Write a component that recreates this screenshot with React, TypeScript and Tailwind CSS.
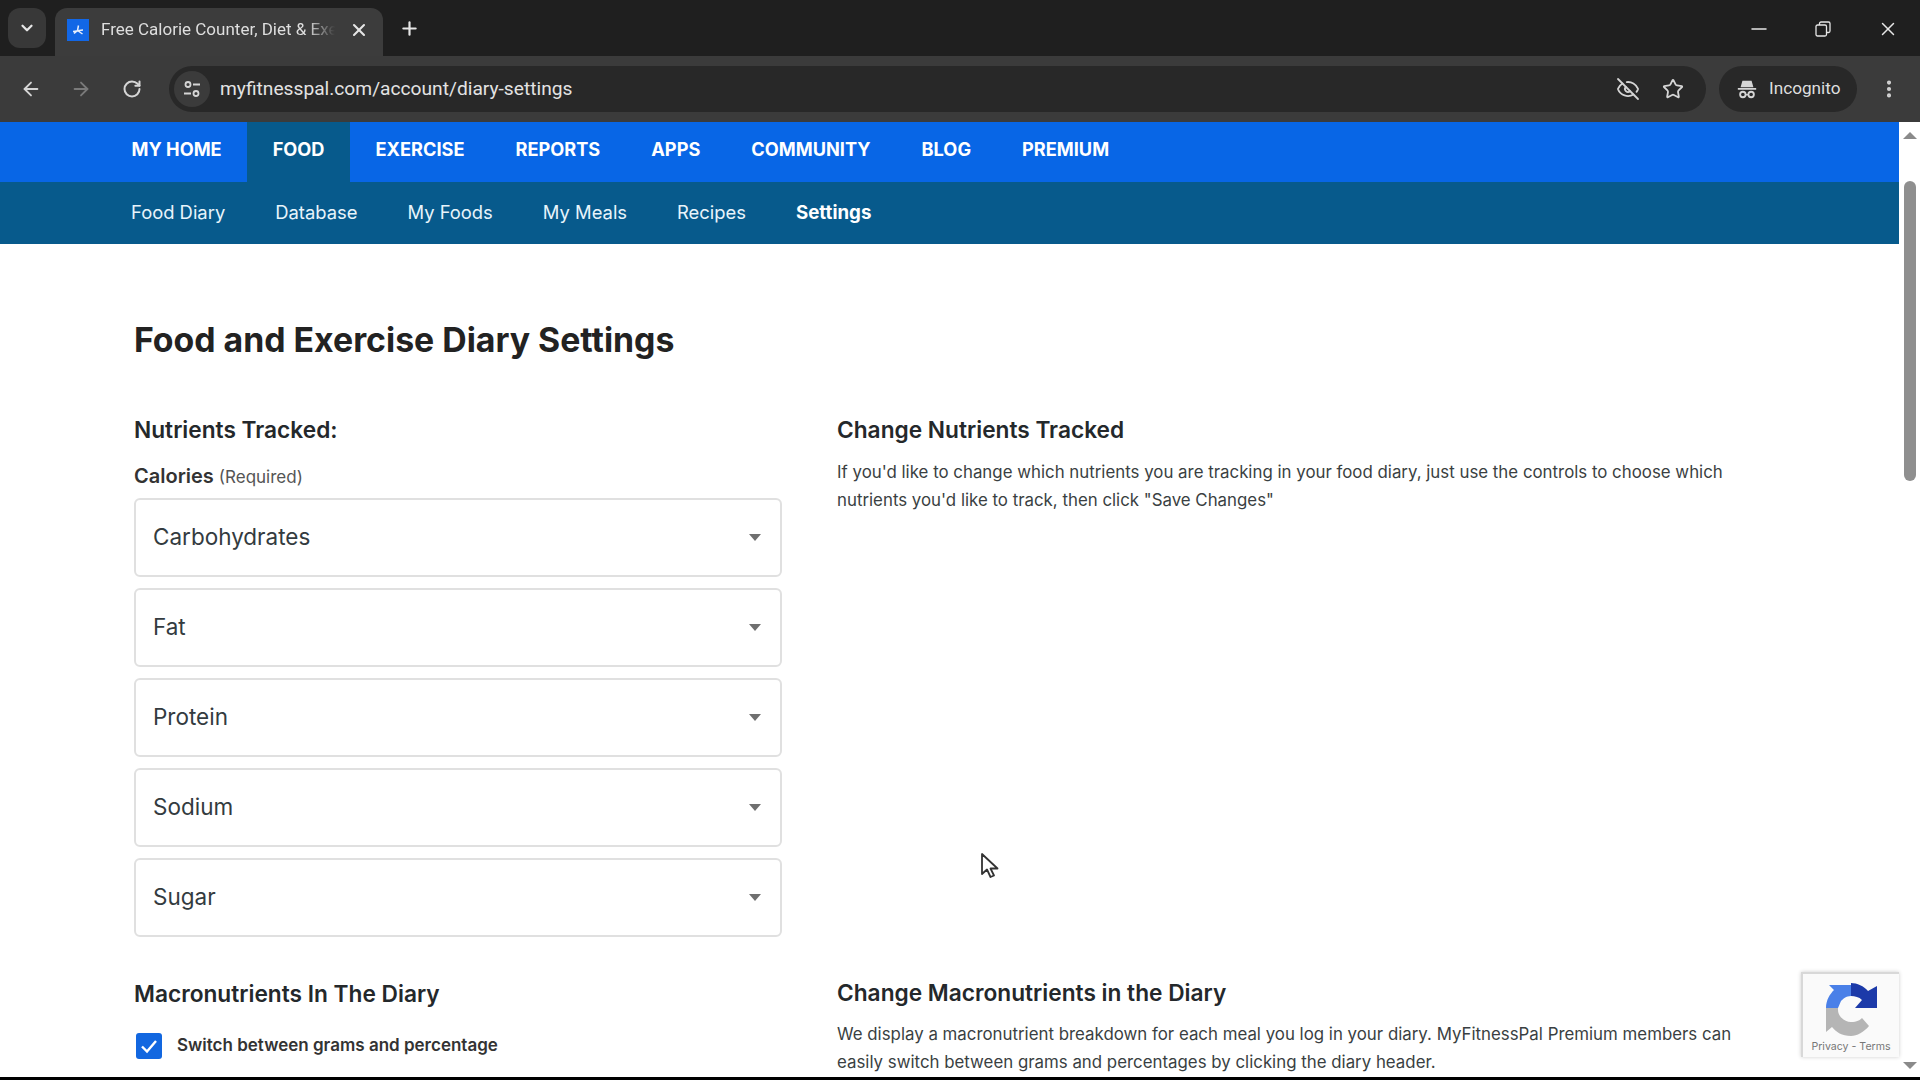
import { ArrowLeft, ArrowRight, ChevronDown, EllipsisVertical, EyeOff, Minus, Plus, RotateCw, Star, X } from "lucide-react";

const topNav = ["MY HOME", "FOOD", "EXERCISE", "REPORTS", "APPS", "COMMUNITY", "BLOG", "PREMIUM"];
const subNav = ["Food Diary", "Database", "My Foods", "My Meals", "Recipes", "Settings"];
const selects = ["Carbohydrates", "Fat", "Protein", "Sodium", "Sugar"];

function SelectBox({ label }: { label: string }) {
  return (
    <div className="flex h-[79px] items-center justify-between rounded-[6px] border-2 border-[#e0e0e0] bg-white pl-[17px] pr-[19px]">
      <span className="text-[22.5px] text-[#333b40]">{label}</span>
      <span className="h-0 w-0 border-x-[6.5px] border-t-[7px] border-x-transparent border-t-[#6f6f6f]" />
    </div>
  );
}

function Recaptcha() {
  return (
    <div className="absolute right-0 bottom-[20px] flex h-[85px] w-[98px] flex-col items-center border-t-2 border-l-2 border-[#d8d8d8] bg-[#fafafa] shadow-[0_0_4px_rgba(0,0,0,0.2)]">
      <svg viewBox="0 0 54 54" className="mt-[8px] h-[54px] w-[54px]">
        <path d="M2 26 C2 18 6 12 10 8 L5 3 H27 V14 C22 14 19 17 17 19 L14 26 Z" fill="#4a80e8" />
        <path d="M27 1 C33 1 40 4 44 9 L53 4 V26 H31 L38 18 C35 15 31 14 27 14 Z" fill="#1c3aa9" />
        <path d="M2 26 H14 A13 13 0 0 0 27 40 C33 40 36 38 38 36 L45 44 C40 50 33 54 27 54 C18 54 12 50 8 45 L2 50 Z" fill="#b5b5b5" />
      </svg>
      <span className="mt-[4px] text-[10.6px] leading-[13px] text-[#777]">Privacy - Terms</span>
    </div>
  );
}

export default function App() {
  return (
    <div className="flex h-screen w-full flex-col overflow-hidden bg-black font-['Inter',sans-serif]">
      {/* tab strip */}
      <div className="flex h-[56px] shrink-0 items-end bg-[#1f1f1f] font-['Roboto',sans-serif] text-[#e6e6e6]">
        <div className="mb-[8px] ml-[8px] flex h-[40px] w-[38px] items-center justify-center rounded-[12px] bg-[#383838]">
          <ChevronDown size={18} strokeWidth={3} />
        </div>
        <div className="ml-[9px] flex h-[48px] w-[328px] items-center rounded-t-[12px] bg-[#3c3c3c] pb-[5px] pl-[12px] pr-[14px]">
          <span className="flex h-[22px] w-[22px] items-center justify-center bg-[#1267e6]">
            <svg viewBox="0 0 22 22" className="h-[22px] w-[22px]" fill="none" stroke="#e6eefc" strokeWidth="1.500">
              <path d="M11.500 6.500L10.500 11.500L7 14.500M10.500 11.500L15.500 15M6 12.500C9 12.500 13 11 16 11" />
            </svg>
          </span>
          <span className="ml-[12px] w-[234px] overflow-hidden text-[17px] whitespace-nowrap text-[#dedede] [mask-image:linear-gradient(to_right,black_88%,transparent)]">
            Free Calorie Counter, Diet &amp; Exercise
          </span>
          <X size={20} strokeWidth={2.5} className="ml-auto text-[#e5e5e5]" />
        </div>
        <Plus size={21} strokeWidth={2.5} className="mb-[17px] ml-[16px]" />
        <div className="mb-[15px] ml-auto flex items-center text-[#e6e6e6]">
          <Minus size={24} strokeWidth={1.5} />
          <svg viewBox="0 0 16 16" className="ml-[44px] h-[16px] w-[16px]" fill="none" stroke="currentColor" strokeWidth="1.3">
            <rect x="1" y="4" width="10.5" height="11" rx="1.5" />
            <path d="M4.5 4V2.500A1.500 1.500 0 0 1 6 1h7.500A1.500 1.500 0 0 1 15 2.500V10a1.500 1.500 0 0 1-1.500 1.500H11.500" />
          </svg>
          <X size={22} strokeWidth={1.6} className="mr-[21px] ml-[46px]" />
        </div>
      </div>

      {/* toolbar */}
      <div className="flex h-[66px] shrink-0 items-center bg-[#3b3b3b] font-['Roboto',sans-serif] text-[#d5d5d5]">
        <ArrowLeft size={22} strokeWidth={2} className="ml-[20px]" />
        <ArrowRight size={22} strokeWidth={2} className="ml-[28px] text-[#7a7a7a]" />
        <RotateCw size={20} strokeWidth={2.4} className="ml-[30px]" />
        <div className="ml-[27px] flex h-[46px] w-[1537px] items-center rounded-full bg-[#282828] pr-[22px]">
          <span className="ml-[5px] flex h-[36px] w-[36px] items-center justify-center rounded-full bg-[#3b3b3b]">
            <svg viewBox="0 0 20 20" className="h-[20px] w-[20px]" fill="none" stroke="currentColor" strokeWidth="1.8">
              <circle cx="6" cy="5.500" r="2.500" />
              <path d="M11 5.500h7M2 14.500h7" />
              <circle cx="14" cy="14.500" r="2.500" />
            </svg>
          </span>
          <span className="ml-[10px] text-[19.2px] text-[#e3e3e3]">
            myfitnesspal.com/account/diary-settings
          </span>
          <EyeOff size={24} strokeWidth={1.8} className="ml-auto" />
          <Star size={22} strokeWidth={2} className="ml-[22px]" />
        </div>
        <div className="ml-[13px] flex h-[46px] w-[138px] items-center rounded-full bg-[#282828] pl-[17px]">
          <svg viewBox="0 0 24 24" className="h-[22px] w-[22px]" fill="currentColor">
            <path d="M7 3h10l2 7H5zM2 11h20v1.800H2z" />
            <circle cx="7.500" cy="18" r="3" fill="none" stroke="currentColor" strokeWidth="2" />
            <circle cx="16.500" cy="18" r="3" fill="none" stroke="currentColor" strokeWidth="2" />
            <path d="M10 17.500h4v1.500h-4z" />
          </svg>
          <span className="ml-[11px] text-[17.2px] text-[#dedede]">Incognito</span>
        </div>
        <EllipsisVertical size={22} strokeWidth={2.5} className="ml-[21px]" />
      </div>

      {/* page */}
      <div className="relative flex h-[955px] shrink-0 bg-white">
        <div className="flex min-w-0 flex-1 flex-col">
          <nav className="flex h-[60px] shrink-0 bg-[#0866e6] pl-[106px] text-[18.2px] font-bold text-white">
            {topNav.map((t) => (
              <span
                key={t}
                className={
                  t === "FOOD"
                    ? "flex items-center bg-[#075a8c] px-[25.5px] pb-[5px]"
                    : "flex items-center px-[25.5px] pb-[5px]"
                }
              >
                {t}
              </span>
            ))}
          </nav>
          <nav className="flex h-[62px] shrink-0 items-center gap-[50px] bg-[#075a8c] pl-[131px] text-[18.4px] text-[#e8f4fb]">
            {subNav.map((t) => (
              <span key={t} className={t === "Settings" ? "text-[18.7px] font-bold text-white" : ""}>
                {t}
              </span>
            ))}
          </nav>
          <main className="flex-1 overflow-hidden pl-[134px] text-[#24282b]">
            <h1 className="mt-[73px] text-[33.8px] leading-[46px] font-bold text-[#222]">
              Food and Exercise Diary Settings
            </h1>
            <div className="mt-[51px] flex">
              <div className="w-[648px] shrink-0">
                <h2 className="text-[22.7px] leading-[32px] font-semibold">Nutrients Tracked:</h2>
                <p className="mt-[17px] text-[20px] leading-[26px] font-semibold text-[#333]">
                  Calories <span className="text-[17px] font-normal text-[#555]">(Required)</span>
                </p>
                <div className="mt-[7.5px] flex flex-col gap-[11px]">
                  {selects.map((s) => (
                    <SelectBox key={s} label={s} />
                  ))}
                </div>
                <h2 className="mt-[41px] text-[22.7px] leading-[32px] font-semibold">Macronutrients In The Diary</h2>
                <label className="mt-[23px] flex items-center">
                  <span className="ml-[2px] flex h-[26px] w-[26px] items-center justify-center rounded-[3px] bg-[#1267e0]">
                    <svg viewBox="0 0 20 20" className="h-[20px] w-[20px]" fill="none" stroke="white" strokeWidth="2.400">
                      <path d="M3 10.500l5 5L17 5" />
                    </svg>
                  </span>
                  <span className="ml-[15px] text-[17px] font-semibold text-[#333]">
                    Switch between grams and percentage
                  </span>
                </label>
              </div>
              <div className="ml-[55px] w-[905px] shrink-0">
                <h2 className="text-[22.7px] leading-[32px] font-semibold">Change Nutrients Tracked</h2>
                <p className="mt-[11.5px] text-[16.85px] leading-[28px] text-[#3a3f42]">
                  If you'd like to change which nutrients you are tracking in your food diary, just use the controls to choose which<br />nutrients you'd like to track, then click "Save Changes"
                </p>
                <h2 className="mt-[463px] text-[22.7px] leading-[32px] font-semibold">Change Macronutrients in the Diary</h2>
                <p className="mt-[11.5px] text-[16.85px] leading-[28px] text-[#3a3f42]">
                  We display a macronutrient breakdown for each meal you log in your diary. MyFitnessPal Premium members can easily switch between grams and percentages by clicking the diary header.
                </p>
              </div>
            </div>
          </main>
        </div>
        <div className="flex w-[21px] shrink-0 flex-col items-center bg-white pt-[10px] pb-[8px]">
          <span className="h-0 w-0 border-x-[7px] border-b-[7px] border-x-transparent border-b-[#8a8a8a]" />
          <span className="mt-[42px] h-[300px] w-[12px] rounded-full bg-[#8f8f8f]" />
          <span className="mt-auto h-0 w-0 border-x-[7px] border-t-[7px] border-x-transparent border-t-[#8a8a8a]" />
        </div>
        <div className="absolute right-[21px] bottom-0 h-0 w-0">
          <Recaptcha />
        </div>
        <svg viewBox="0 0 20 28" className="absolute top-[730px] left-[980px] h-[28px] w-[20px]" fill="white" stroke="#333" strokeWidth="1.800" strokeLinejoin="round">
          <path d="M2 2v20l5-4.500 3.500 7.500 3.500-1.500-3.500-7h7z" />
        </svg>
      </div>
      <div className="h-[3px] shrink-0 bg-black" />
    </div>
  );
}
